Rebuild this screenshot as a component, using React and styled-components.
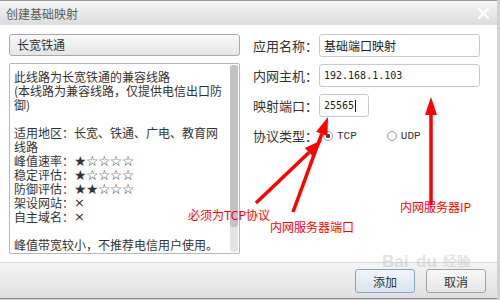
import styled, { createGlobalStyle } from 'styled-components'

const GlobalStyle = createGlobalStyle`
  html, body { margin: 0; padding: 0; background: #d2d2d2; }
  body { font-family: "Noto Sans CJK SC", "Noto Sans", sans-serif; }
  * { box-sizing: border-box; }
`

const Screen = styled.div`
  position: relative;
  width: 500px;
  height: 300px;
  overflow: hidden;
  background: #d2d2d2;
`

const Dialog = styled.div`
  width: 497px;
  height: 299px;
  border-top: 1px solid #9a9a9a;
  border-bottom: 1px solid #8a8a8a;
  display: flex;
  flex-direction: column;
  background: #fff;
`

const TitleBar = styled.div`
  height: 24px;
  flex: none;
  display: flex;
  align-items: center;
  justify-content: space-between;
  padding: 0 8px 0 6px;
  background: linear-gradient(#f5f5f5, #dcdcdc);
  color: #5a5a5a;
  font-size: 12px;
`

const Body = styled.div`
  flex: 1;
  display: flex;
  gap: 13px;
  padding: 9px 0 0 9px;
`

const LeftCol = styled.div`
  width: 231px;
  display: flex;
  flex-direction: column;
  gap: 7px;
`

const NameBox = styled.div`
  height: 22px;
  border: 1px solid #a9a9a9;
  border-radius: 3px;
  background: linear-gradient(#f9f9f9, #e5e5e5);
  padding-left: 7px;
  font-size: 12px;
  line-height: 20px;
  color: #333;
`

const InfoBox = styled.div`
  height: 191px;
  border: 1px solid #b8b8b8;
  border-radius: 2px;
  display: flex;
  overflow: hidden;
`

const InfoText = styled.div`
  flex: 1;
  padding: 6px 0 0 4px;
  font-size: 12px;
  line-height: 14px;
  color: #333;
  overflow: hidden;
`

const Line = styled.div`
  height: 14px;
  white-space: nowrap;
  display: flex;
  align-items: center;
`

const Stars = styled.span`
  font-family: "DejaVu Sans", sans-serif;
  font-size: 14px;
  line-height: 14px;
  letter-spacing: -0.6px;
  color: #333;
`

const Cross = styled.span`
  font-family: "DejaVu Sans", sans-serif;
  font-size: 13px;
  line-height: 14px;
`

const ScrollTrack = styled.div`
  width: 8px;
  margin: 1px 1px 1px 0;
  background: #e4e4e4;
  border-radius: 3px;
`

const ScrollThumb = styled.div`
  height: 162px;
  background: #c2c2c2;
  border-radius: 3px;
`

const RightCol = styled.div`
  display: flex;
  flex-direction: column;
  gap: 7px;
`

const FieldRow = styled.div`
  height: 23px;
  display: flex;
  align-items: center;
`

const Label = styled.span`
  width: 66px;
  font-size: 13px;
  color: #333;
`

const Input = styled.div`
  width: ${p => p.$w || 161}px;
  height: 23px;
  border: 1px solid #cacaca;
  border-radius: 3px;
  padding-left: 4px;
  display: flex;
  align-items: center;
  font-size: 12px;
  color: #222;
  font-family: ${p => p.$mono ? '"DejaVu Sans Mono", monospace' : '"Noto Sans CJK SC", sans-serif'};
  ${p => p.$mono && 'font-size: 10px;'}
`

const Caret = styled.span`
  width: 1px;
  height: 12px;
  background: #222;
  margin-left: 1px;
`

const RadioGroup = styled.div`
  display: flex;
  align-items: center;
  margin-left: 4px;
`

const RadioItem = styled.label`
  display: flex;
  align-items: center;
  gap: 4px;
  margin-right: 30px;
  font-family: "Liberation Mono", monospace;
  font-size: 11px;
  color: #333;
`

const RadioDot = styled.span`
  width: 10px;
  height: 10px;
  border-radius: 50%;
  border: 1px solid #9a9a9a;
  background: radial-gradient(circle, ${p => p.$on ? '#444 0, #444 2px, #fff 2.5px' : '#fff 0'}, #f2f2f2 100%);
`

const Footer = styled.div`
  height: 36px;
  flex: none;
  border-top: 1px solid #d8d8d8;
  background: linear-gradient(#f4f4f4, #e0e0e0);
  display: flex;
  justify-content: flex-end;
  gap: 11px;
  padding: 6px 11px 0 0;
`

const Button = styled.button`
  width: 60px;
  height: 24px;
  border-radius: 3px;
  font-family: "Noto Sans CJK SC", sans-serif;
  font-size: 12px;
  color: #333;
  padding: 0;
  border: 1px solid ${p => p.$primary ? '#8aa4bd' : '#a3a3a3'};
  background: ${p => p.$primary
    ? 'linear-gradient(#f0f5fa, #d8e4ef)'
    : 'linear-gradient(#f8f8f8, #e6e6e6)'};
`

const Overlay = styled.svg`
  position: absolute;
  left: 0;
  top: 0;
  pointer-events: none;
`

const Note = styled.span`
  position: absolute;
  left: ${p => p.$x}px;
  top: ${p => p.$y}px;
  color: #ff0000;
  font-size: 12px;
  line-height: 14px;
  white-space: nowrap;
`

const Watermark = styled.span`
  position: absolute;
  left: ${p => p.$x}px;
  top: ${p => p.$y}px;
  color: rgba(190, 190, 190, 0.45);
  font-family: "Liberation Sans", sans-serif;
  font-weight: bold;
  font-size: ${p => p.$size}px;
  white-space: nowrap;
  pointer-events: none;
`

const lines = [
  '此线路为长宽铁通的兼容线路',
  '(本线路为兼容线路，仅提供电信出口防',
  '御)',
  '',
  '适用地区：长宽、铁通、广电、教育网',
  '线路',
  ['峰值速率：', 1],
  ['稳定评估：', 1],
  ['防御评估：', 2],
  ['架设网站：', 'x'],
  ['自主域名：', 'x'],
  '',
  '峰值带宽较小，不推荐电信用户使用。',
]

function InfoLine({ item }) {
  if (typeof item === 'string') return <Line>{item}</Line>
  const [label, v] = item
  if (v === 'x') return <Line>{label}<Cross>×</Cross></Line>
  return <Line>{label}<Stars>{'★'.repeat(v) + '☆'.repeat(5 - v)}</Stars></Line>
}

function Arrow({ x1, y1, x2, y2 }) {
  const dx = x2 - x1
  const dy = y2 - y1
  const len = Math.hypot(dx, dy)
  const ux = dx / len
  const uy = dy / len
  const head = 18
  const half = 6
  const bx = x2 - ux * head
  const by = y2 - uy * head
  const px = -uy * half
  const py = ux * half
  return (
    <g fill="#ff0000" stroke="#ff0000">
      <line x1={x1} y1={y1} x2={bx} y2={by} strokeWidth="3.5" />
      <polygon points={`${x2},${y2} ${bx + px},${by + py} ${bx - px},${by - py}`} strokeWidth="0" />
    </g>
  )
}

export default function App() {
  return (
    <Screen>
      <GlobalStyle />
      <Dialog>
        <TitleBar>
          <span>创建基础映射</span>
          <svg width="11" height="11" viewBox="0 0 11 11">
            <path d="M1 1 L10 10 M10 1 L1 10" stroke="#fff" strokeWidth="2.4" strokeLinecap="round" />
          </svg>
        </TitleBar>
        <Body>
          <LeftCol>
            <NameBox>长宽铁通</NameBox>
            <InfoBox>
              <InfoText>
                {lines.map((l, i) => <InfoLine key={i} item={l} />)}
              </InfoText>
              <ScrollTrack>
                <ScrollThumb />
              </ScrollTrack>
            </InfoBox>
          </LeftCol>
          <RightCol>
            <FieldRow>
              <Label>应用名称：</Label>
              <Input>基础端口映射</Input>
            </FieldRow>
            <FieldRow>
              <Label>内网主机：</Label>
              <Input $mono>192.168.1.103</Input>
            </FieldRow>
            <FieldRow>
              <Label>映射端口：</Label>
              <Input $w={50} $mono>25565<Caret /></Input>
            </FieldRow>
            <FieldRow>
              <Label>协议类型：</Label>
              <RadioGroup>
                <RadioItem><RadioDot $on />TCP</RadioItem>
                <RadioItem><RadioDot />UDP</RadioItem>
              </RadioGroup>
            </FieldRow>
          </RightCol>
        </Body>
        <Footer>
          <Button $primary>添加</Button>
          <Button>取消</Button>
        </Footer>
      </Dialog>

      <Watermark $x={382} $y={252} $size={17}>Bai</Watermark>
      <Watermark $x={416} $y={252} $size={17}>du</Watermark>
      <Watermark $x={443} $y={253} $size={14}>经验</Watermark>

      <Overlay width="500" height="300" viewBox="0 0 500 300">
        <Arrow x1={256} y1={203} x2={322} y2={140} />
        <Arrow x1={293} y1={212} x2={328} y2={117} />
        <Arrow x1={431} y1={205} x2={431} y2={97} />
      </Overlay>
      <Note $x={188} $y={208}>必须为TCP协议</Note>
      <Note $x={270} $y={220}>内网服务器端口</Note>
      <Note $x={400} $y={200}>内网服务器IP</Note>
    </Screen>
  )
}
